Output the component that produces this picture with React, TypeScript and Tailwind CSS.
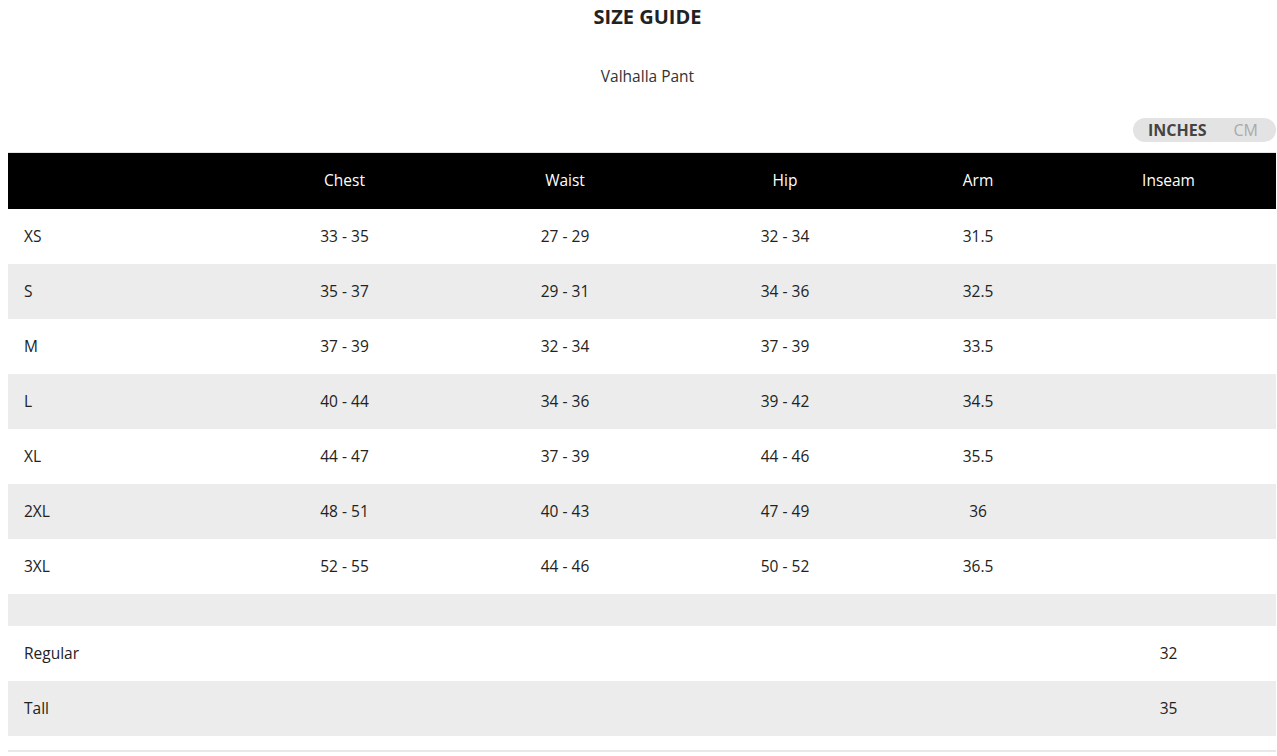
import React from "react";

const rows: [string, string, string, string, string, string][] = [
  ["XS", "33 - 35", "27 - 29", "32 - 34", "31.5", ""],
  ["S", "35 - 37", "29 - 31", "34 - 36", "32.5", ""],
  ["M", "37 - 39", "32 - 34", "37 - 39", "33.5", ""],
  ["L", "40 - 44", "34 - 36", "39 - 42", "34.5", ""],
  ["XL", "44 - 47", "37 - 39", "44 - 46", "35.5", ""],
  ["2XL", "48 - 51", "40 - 43", "47 - 49", "36", ""],
  ["3XL", "52 - 55", "44 - 46", "50 - 52", "36.5", ""],
];

const extra: [string, string][] = [
  ["Regular", "32"],
  ["Tall", "35"],
];

const cols = "grid grid-cols-[226px_221px_220px_220px_166px_1fr]";

export default function App() {
  return (
    <div
      className="bg-white w-[1277px] h-[756px] overflow-hidden text-[#222]"
      style={{ fontFamily: '"Open Sans", "Noto Sans", sans-serif' }}
    >
      <h1 className="text-center pl-[18px] text-[20px] font-bold text-[#222] pt-[4px] leading-[26px]">
        SIZE GUIDE
      </h1>
      <p className="text-center pl-[18px] text-[15.5px] mt-[35px] leading-[22px] text-[#333]">
        Valhalla Pant
      </p>
      <div className="flex justify-end pr-px mt-[31px]">
        <div className="flex items-center h-[24px] w-[143px] rounded-full bg-[#e3e3e3] pl-[15px] gap-[27px] text-[16px]">
          <span className="font-bold text-[#444]">INCHES</span>
          <span className="text-[#aaa]">CM</span>
        </div>
      </div>
      <div className="ml-[8px] mr-[1px] mt-[10px] border-t border-[#e5e5e5]">
        <div className={`${cols} h-[56px] bg-black text-white text-[15.5px] items-center`}>
          <div />
          <div className="text-center">Chest</div>
          <div className="text-center">Waist</div>
          <div className="text-center">Hip</div>
          <div className="text-center">Arm</div>
          <div className="text-center">Inseam</div>
        </div>
        {rows.map((r, i) => (
          <div
            key={r[0]}
            className={`${cols} h-[55px] items-center text-[15.5px] ${i % 2 === 1 ? "bg-[#ebeceb]" : "bg-white"}`}
          >
            <div className="pl-[16px]">{r[0]}</div>
            <div className="text-center">{r[1]}</div>
            <div className="text-center">{r[2]}</div>
            <div className="text-center">{r[3]}</div>
            <div className="text-center">{r[4]}</div>
            <div className="text-center">{r[5]}</div>
          </div>
        ))}
        <div className="h-[32px] bg-[#ebeceb]" />
        {extra.map((r, i) => (
          <div
            key={r[0]}
            className={`${cols} h-[55px] items-center text-[15.5px] ${i % 2 === 1 ? "bg-[#ebeceb]" : "bg-white"}`}
          >
            <div className="pl-[16px]">{r[0]}</div>
            <div />
            <div />
            <div />
            <div />
            <div className="text-center">{r[1]}</div>
          </div>
        ))}
        <div className="h-[14px]" />
        <div className="border-t-2 border-[#e8e8e8]" />
      </div>
    </div>
  );
}
